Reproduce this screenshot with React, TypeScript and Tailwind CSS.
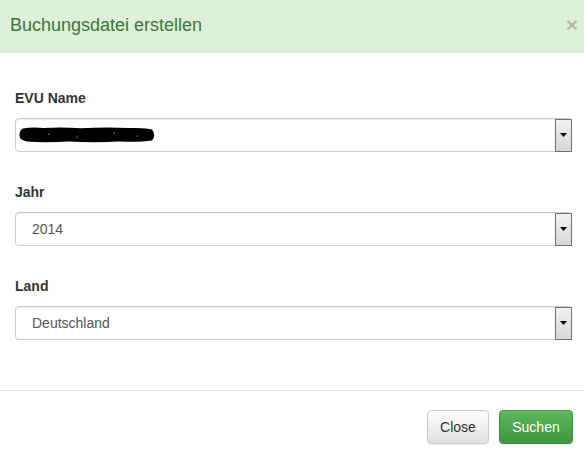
const font = { fontFamily: '"Liberation Sans", Arial, sans-serif' };

function Caret() {
  return (
    <div className="-mr-px flex h-[33px] w-[17px] shrink-0 items-center justify-center self-center border border-[#707070] bg-gradient-to-b from-[#f2f2f2] to-[#d6d6d6]">
      <svg width="7" height="4" viewBox="0 0 7 4" aria-hidden>
        <path d="M0 0h7L3.5 4z" fill="#000" />
      </svg>
    </div>
  );
}

function SelectBox({ children, inset = "pl-[16px]" }: { children?: React.ReactNode; inset?: string }) {
  return (
    <div className="flex h-[34px] items-stretch rounded-[4px] border border-[#ccc] bg-white shadow-[inset_0_1px_1px_rgba(0,0,0,0.075)]">
      <div className={`flex min-w-0 flex-1 items-center text-[14px] text-[#555] ${inset}`}>{children}</div>
      <Caret />
    </div>
  );
}

function Field({
  label,
  inset,
  children,
}: {
  label: string;
  inset?: string;
  children?: React.ReactNode;
}) {
  return (
    <div className="flex flex-col">
      <label className="mb-[10px] h-[20px] text-[14px] font-bold leading-[20px] text-[#333]">{label}</label>
      <SelectBox inset={inset}>{children}</SelectBox>
    </div>
  );
}

// redacted value, drawn as a rough black scribble
function Redacted() {
  return (
    <svg width="137" height="16" viewBox="0 0 137 16" aria-hidden>
      <path
        d="M4 1.5 Q12 0 24 1 Q42 0 62 1.2 Q86 0 110 1 Q128 0.5 133 2.5 Q137.5 8 133 13.5 Q120 15.5 100 14.5 Q75 16 50 14.5 Q25 16 8 14.5 Q0 13 0.5 8 Q0.5 3 4 1.5z"
        fill="#000"
      />
      <circle cx="30" cy="7" r="0.6" fill="#fff" />
      <circle cx="58" cy="10" r="0.5" fill="#fff" />
      <circle cx="95" cy="6" r="0.6" fill="#fff" />
      <circle cx="118" cy="9" r="0.5" fill="#fff" />
    </svg>
  );
}

export default function App() {
  return (
    <div className="flex h-[458px] w-[584px] flex-col overflow-hidden bg-white" style={font}>
      <header className="flex h-[53px] shrink-0 items-center justify-between border-b border-[#e5e5e5] bg-[#dff0d8] pl-[10px] pr-[6px]">
        <h4 className="pb-[2px] text-[18px] leading-[25px] text-[#3c763d]">Buchungsdatei erstellen</h4>
        <button
          type="button"
          className="mb-[4px] text-[21px] font-bold leading-none text-black opacity-20"
          aria-label="Close"
        >
          ×
        </button>
      </header>

      <div className="flex flex-1 flex-col gap-[30px] pl-[15px] pr-[12px] pt-[35px]">
        <Field label="EVU Name" inset="pl-[3px]">
          <Redacted />
        </Field>
        <Field label="Jahr">2014</Field>
        <Field label="Land">Deutschland</Field>
      </div>

      <footer className="flex h-[68px] shrink-0 items-start justify-end gap-[10px] border-t border-[#e5e5e5] pr-[11px] pt-[19px]">
        <button
          type="button"
          className="h-[34px] w-[62px] rounded-[4px] border border-[#ccc] bg-gradient-to-b from-white to-[#e0e0e0] text-[14px] text-[#333] shadow-[inset_0_1px_0_rgba(255,255,255,0.15),0_1px_1px_rgba(0,0,0,0.075)]"
        >
          Close
        </button>
        <button
          type="button"
          className="h-[34px] w-[74px] rounded-[4px] border border-[#3e8f3e] bg-gradient-to-b from-[#5cb85c] to-[#419641] text-[14px] text-white shadow-[inset_0_1px_0_rgba(255,255,255,0.15),0_1px_1px_rgba(0,0,0,0.075)]"
        >
          Suchen
        </button>
      </footer>
    </div>
  );
}
